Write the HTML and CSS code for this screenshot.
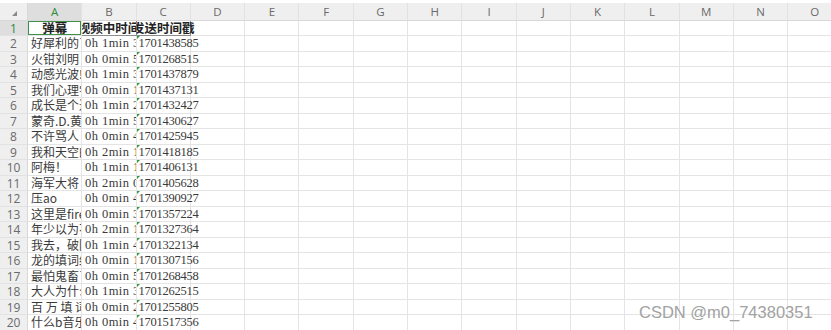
FILE: index.html
```html
<!DOCTYPE html>
<html lang="zh">
<head>
<meta charset="utf-8">
<title>Sheet</title>
<link rel="stylesheet" href="styles.css">
</head>
<body>
<div class="sheet">
  <div class="corner"><span class="tri"></span></div>
  <div class="ch sel">A</div><div class="ch">B</div><div class="ch">C</div><div class="ch">D</div><div class="ch">E</div><div class="ch">F</div><div class="ch">G</div><div class="ch">H</div><div class="ch">I</div><div class="ch">J</div><div class="ch">K</div><div class="ch">L</div><div class="ch">M</div><div class="ch">N</div><div class="ch">O</div>

  <div class="rh sel">1</div><div class="c h1 a1">弹幕</div><div class="c h1 b1">视频中时间</div><div class="c h1 c1"><span>发送时间戳</span></div><div class="c"></div><div class="c"></div><div class="c"></div><div class="c"></div><div class="c"></div><div class="c"></div><div class="c"></div><div class="c"></div><div class="c"></div><div class="c"></div><div class="c"></div><div class="c"></div>

  <div class="rh">2</div><div class="c t">好犀利的了</div><div class="c m">0h 1min 35s</div><div class="c n">1701438585</div><div class="c"></div><div class="c"></div><div class="c"></div><div class="c"></div><div class="c"></div><div class="c"></div><div class="c"></div><div class="c"></div><div class="c"></div><div class="c"></div><div class="c"></div><div class="c"></div>
  <div class="rh">3</div><div class="c t">火钳刘明</div><div class="c m">0h 0min 52s</div><div class="c n">1701268515</div><div class="c"></div><div class="c"></div><div class="c"></div><div class="c"></div><div class="c"></div><div class="c"></div><div class="c"></div><div class="c"></div><div class="c"></div><div class="c"></div><div class="c"></div><div class="c"></div>
  <div class="rh">4</div><div class="c t">动感光波!!!</div><div class="c m">0h 1min 30s</div><div class="c n">1701437879</div><div class="c"></div><div class="c"></div><div class="c"></div><div class="c"></div><div class="c"></div><div class="c"></div><div class="c"></div><div class="c"></div><div class="c"></div><div class="c"></div><div class="c"></div><div class="c"></div>
  <div class="rh">5</div><div class="c t">我们心理学</div><div class="c m">0h 0min 12s</div><div class="c n">1701437131</div><div class="c"></div><div class="c"></div><div class="c"></div><div class="c"></div><div class="c"></div><div class="c"></div><div class="c"></div><div class="c"></div><div class="c"></div><div class="c"></div><div class="c"></div><div class="c"></div>
  <div class="rh">6</div><div class="c t">成长是个过程</div><div class="c m">0h 1min 25s</div><div class="c n">1701432427</div><div class="c"></div><div class="c"></div><div class="c"></div><div class="c"></div><div class="c"></div><div class="c"></div><div class="c"></div><div class="c"></div><div class="c"></div><div class="c"></div><div class="c"></div><div class="c"></div>
  <div class="rh">7</div><div class="c t">蒙奇.D.黄猿</div><div class="c m">0h 1min 58s</div><div class="c n">1701430627</div><div class="c"></div><div class="c"></div><div class="c"></div><div class="c"></div><div class="c"></div><div class="c"></div><div class="c"></div><div class="c"></div><div class="c"></div><div class="c"></div><div class="c"></div><div class="c"></div>
  <div class="rh">8</div><div class="c t">不许骂人</div><div class="c m">0h 0min 44s</div><div class="c n">1701425945</div><div class="c"></div><div class="c"></div><div class="c"></div><div class="c"></div><div class="c"></div><div class="c"></div><div class="c"></div><div class="c"></div><div class="c"></div><div class="c"></div><div class="c"></div><div class="c"></div>
  <div class="rh">9</div><div class="c t">我和天空的</div><div class="c m">0h 2min 10s</div><div class="c n">1701418185</div><div class="c"></div><div class="c"></div><div class="c"></div><div class="c"></div><div class="c"></div><div class="c"></div><div class="c"></div><div class="c"></div><div class="c"></div><div class="c"></div><div class="c"></div><div class="c"></div>
  <div class="rh">10</div><div class="c t">阿梅！</div><div class="c m">0h 1min 15s</div><div class="c n">1701406131</div><div class="c"></div><div class="c"></div><div class="c"></div><div class="c"></div><div class="c"></div><div class="c"></div><div class="c"></div><div class="c"></div><div class="c"></div><div class="c"></div><div class="c"></div><div class="c"></div>
  <div class="rh">11</div><div class="c t">海军大将</div><div class="c m">0h 2min 05s</div><div class="c n">1701405628</div><div class="c"></div><div class="c"></div><div class="c"></div><div class="c"></div><div class="c"></div><div class="c"></div><div class="c"></div><div class="c"></div><div class="c"></div><div class="c"></div><div class="c"></div><div class="c"></div>
  <div class="rh">12</div><div class="c t">压ao</div><div class="c m">0h 0min 47s</div><div class="c n">1701390927</div><div class="c"></div><div class="c"></div><div class="c"></div><div class="c"></div><div class="c"></div><div class="c"></div><div class="c"></div><div class="c"></div><div class="c"></div><div class="c"></div><div class="c"></div><div class="c"></div>
  <div class="rh">13</div><div class="c t">这里是fire</div><div class="c m">0h 0min 33s</div><div class="c n">1701357224</div><div class="c"></div><div class="c"></div><div class="c"></div><div class="c"></div><div class="c"></div><div class="c"></div><div class="c"></div><div class="c"></div><div class="c"></div><div class="c"></div><div class="c"></div><div class="c"></div>
  <div class="rh">14</div><div class="c t">年少以为不</div><div class="c m">0h 2min 18s</div><div class="c n">1701327364</div><div class="c"></div><div class="c"></div><div class="c"></div><div class="c"></div><div class="c"></div><div class="c"></div><div class="c"></div><div class="c"></div><div class="c"></div><div class="c"></div><div class="c"></div><div class="c"></div>
  <div class="rh">15</div><div class="c t">我去，破防了</div><div class="c m">0h 1min 41s</div><div class="c n">1701322134</div><div class="c"></div><div class="c"></div><div class="c"></div><div class="c"></div><div class="c"></div><div class="c"></div><div class="c"></div><div class="c"></div><div class="c"></div><div class="c"></div><div class="c"></div><div class="c"></div>
  <div class="rh">16</div><div class="c t">龙的填词绝了</div><div class="c m">0h 0min 16s</div><div class="c n">1701307156</div><div class="c"></div><div class="c"></div><div class="c"></div><div class="c"></div><div class="c"></div><div class="c"></div><div class="c"></div><div class="c"></div><div class="c"></div><div class="c"></div><div class="c"></div><div class="c"></div>
  <div class="rh">17</div><div class="c t">最怕鬼畜了</div><div class="c m">0h 0min 59s</div><div class="c n">1701268458</div><div class="c"></div><div class="c"></div><div class="c"></div><div class="c"></div><div class="c"></div><div class="c"></div><div class="c"></div><div class="c"></div><div class="c"></div><div class="c"></div><div class="c"></div><div class="c"></div>
  <div class="rh">18</div><div class="c t">大人为什么</div><div class="c m">0h 1min 37s</div><div class="c n">1701262515</div><div class="c"></div><div class="c"></div><div class="c"></div><div class="c"></div><div class="c"></div><div class="c"></div><div class="c"></div><div class="c"></div><div class="c"></div><div class="c"></div><div class="c"></div><div class="c"></div>
  <div class="rh">19</div><div class="c t">百 万 填 词</div><div class="c m">0h 0min 26s</div><div class="c n">1701255805</div><div class="c"></div><div class="c"></div><div class="c"></div><div class="c"></div><div class="c"></div><div class="c"></div><div class="c"></div><div class="c"></div><div class="c"></div><div class="c"></div><div class="c"></div><div class="c"></div>
  <div class="rh">20</div><div class="c t">什么b音乐</div><div class="c m">0h 0min 48s</div><div class="c n">1701517356</div><div class="c"></div><div class="c"></div><div class="c"></div><div class="c"></div><div class="c"></div><div class="c"></div><div class="c"></div><div class="c"></div><div class="c"></div><div class="c"></div><div class="c"></div><div class="c"></div>
</div>
<div class="watermark">CSDN @m0_74380351</div>
</body>
</html>
```
FILE: styles.css
```css
html, body {
  margin: 0;
  padding: 0;
  background: #ffffff;
  overflow: hidden;
  width: 831px;
  height: 330px;
}

body {
  position: relative;
  font-family: "Noto Sans CJK SC", sans-serif;
}

.sheet {
  margin-top: 3px;
  display: grid;
  grid-template-columns: 28px repeat(15, 54.3px);
  grid-template-rows: 17.5px repeat(20, 15.5px);
  width: max-content;
}

.sheet > div {
  box-sizing: border-box;
  position: relative;
  border-right: 1px solid #e4e4e4;
  border-bottom: 1px solid #e4e4e4;
  white-space: nowrap;
  overflow: hidden;
}

.corner {
  background: #efefef;
  border-right-color: #d8d8d8 !important;
  border-bottom-color: #d8d8d8 !important;
}

.tri {
  position: absolute;
  left: 12px;
  top: 8px;
  width: 0;
  height: 0;
  border-bottom: 5px solid #8a8a8a;
  border-left: 5px solid transparent;
}

.ch {
  background: #efefef;
  border-right-color: #e2e2e2 !important;
  border-bottom-color: #d8d8d8 !important;
  font-family: "Open Sans", sans-serif;
  font-size: 11.5px;
  line-height: 17px;
  color: #6a6a6a;
  text-align: center;
}

.rh {
  background: #efefef;
  border-right-color: #d8d8d8 !important;
  border-bottom-color: #e2e2e2 !important;
  font-family: "Open Sans", sans-serif;
  font-size: 12px;
  line-height: 15px;
  color: #6a6a6a;
  text-align: center;
}

.ch.sel,
.rh.sel {
  background: #dedede;
  color: #2e8b3c;
}

.c {
  font-size: 12px;
  line-height: 14.5px;
  color: #3a3a3a;
  padding: 0 1px 0 3px;
}

.c.t {
  padding-left: 3px;
}

.c.m {
  font-family: "Liberation Serif", serif;
  font-size: 12.5px;
  letter-spacing: 0.45px;
  padding-left: 2.7px;
}

.c.n {
  font-family: "Liberation Serif", serif;
  font-size: 12.5px;
  letter-spacing: -0.25px;
  overflow: visible;
  padding-left: 1.8px;
}

.c.n::before {
  content: "";
  position: absolute;
  left: 0;
  top: 0;
  width: 0;
  height: 0;
  border-top: 3px solid #2f9a3a;
  border-right: 3px solid transparent;
}

.h1 {
  font-weight: bold;
  text-align: center;
  padding: 0;
  color: #222;
  font-size: 12.5px;
}

.b1 {
  border-right-color: #8c8c8c !important;
  border-bottom-color: #8c8c8c !important;
  display: flex;
  justify-content: center;
}

.c1 {
  overflow: visible !important;
  clip-path: inset(0 -80px 0 0);
  border-right-color: #8c8c8c !important;
  border-bottom-color: #8c8c8c !important;
  display: flex;
  justify-content: center;
}

.a1::after {
  content: "";
  position: absolute;
  left: -1px;
  top: -1px;
  right: -1px;
  bottom: -1px;
  border: 2px solid #3f9147;
}

.watermark {
  position: absolute;
  left: 639px;
  top: 303px;
  font-family: "Liberation Sans", Arial, sans-serif;
  font-size: 16.5px;
  color: #a2a2a2;
}
```
